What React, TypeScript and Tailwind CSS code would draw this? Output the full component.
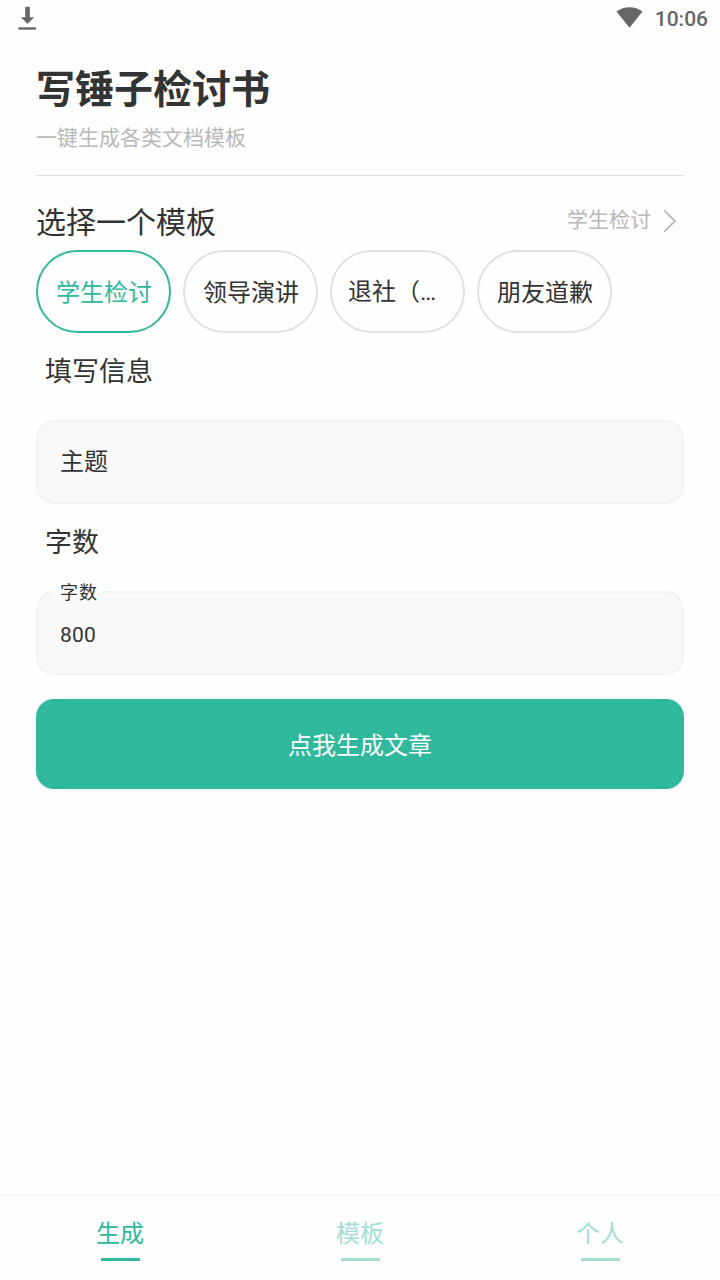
import { useState } from 'react'
import clsx from 'clsx'

const templates = ['学生检讨', '领导演讲', '退社（团）申请', '朋友道歉']
const tabs = ['生成', '模板', '个人']

export default function App() {
  const [template, setTemplate] = useState(templates[0])
  const [tab, setTab] = useState(tabs[0])

  return (
    <div className="flex h-[1280px] w-[720px] flex-col overflow-hidden bg-[#fefefe] font-[Roboto,'Noto_Sans_CJK_SC',sans-serif] text-[#333333]">
      <StatusBar />

      <main className="flex flex-1 flex-col px-9">
        <header className="h-[140px] border-b border-[#e0e0e0] pt-[25px]">
          <h1 className="text-[39px] font-bold leading-[58px]">写锤子检讨书</h1>
          <p className="mt-1 text-[21px] leading-[30px] text-[#b8b8b8]">
            一键生成各类文档模板
          </p>
        </header>

        <section>
          <div className="flex h-[74px] items-start justify-between pt-[25px]">
            <h2 className="text-[30px] leading-[44px]">选择一个模板</h2>
            <button
              type="button"
              className="flex items-center gap-3 pr-[7px] pt-1 text-[21px] leading-[30px] text-[#b8b8b8]"
            >
              学生检讨
              <ChevronIcon />
            </button>
          </div>
          <div className="flex gap-3">
            {templates.map((name) => (
              <TemplateChip
                key={name}
                name={name}
                active={name === template}
                onClick={() => setTemplate(name)}
              />
            ))}
          </div>
        </section>

        <h3 className="mt-[19px] pl-[9px] text-[27px] leading-[40px]">填写信息</h3>
        <div className="mt-7 flex h-[84px] items-center rounded-[18px] border-2 border-[#f3f3f3] bg-[#f9f9f9] px-[22px] text-[24px]">
          主题
        </div>

        <h3 className="mt-[19px] pl-[9px] text-[27px] leading-[40px]">字数</h3>
        <div className="relative mt-7 flex h-[84px] items-center rounded-[18px] border-2 border-[#f3f3f3] bg-[#f9f9f9] px-[22px]">
          <span className="absolute -top-[2px] left-4 h-[2px] w-[50px] bg-[#f9f9f9]" />
          <label className="absolute -top-[13px] left-[22px] text-[18px] leading-[26px] tracking-[0.9px]">
            字数
          </label>
          <span className="pt-[5px] text-[21px] tracking-[0.2px]">800</span>
        </div>

        <button
          type="button"
          className="mt-6 h-[90px] rounded-[18px] bg-[#30b89d] pt-1 text-[24px] text-white"
        >
          点我生成文章
        </button>
      </main>

      <nav className="grid h-[84px] grid-cols-3 shadow-[0_0_3px_rgba(0,0,0,0.1)]">
        {tabs.map((name) => (
          <button
            key={name}
            type="button"
            onClick={() => setTab(name)}
            className={clsx(
              'flex flex-col items-center pt-[21px] text-[24px] leading-[34px]',
              name === tab ? 'text-[#30b89d]' : 'text-[#a2dfd2]',
            )}
          >
            {name}
            <span className="ml-px mt-[7px] h-[3px] w-[39px] bg-current" />
          </button>
        ))}
      </nav>
    </div>
  )
}

function StatusBar() {
  return (
    <div className="flex h-9 items-center justify-between pl-[18px] pr-3 text-[#666666]">
      <svg width="18" height="24" viewBox="0 0 18 24" fill="currentColor">
        <path d="M7.2.8h4.6v10.4h4.4L9.5 17.7 2.8 11.2h4.4z" />
        <path d="M.4 21.3H18v2.4H.4z" />
      </svg>
      <div className="flex items-start gap-3">
        <svg
          width="27"
          height="21"
          viewBox="0 0 27 21"
          fill="currentColor"
          className="mt-[7px]"
        >
          <path d="M.5 4.6C4.3 1.7 8.7.2 13.5.2s9.2 1.5 13 4.4L13.5 20.8z" />
        </svg>
        <span className="pt-px text-[21px] font-medium leading-9">10:06</span>
      </div>
    </div>
  )
}

type TemplateChipProps = {
  name: string
  active: boolean
  onClick: () => void
}

function TemplateChip({ name, active, onClick }: TemplateChipProps) {
  const isLong = name.length > 4

  return (
    <button
      type="button"
      onClick={onClick}
      className={clsx(
        'h-[83px] w-[135px] rounded-full border-2 text-[24px]',
        active ? 'border-[#30b89d] text-[#30b89d]' : 'border-[#e0e0e0]',
        isLong ? 'pl-4 text-left' : 'pl-px pt-[3px] text-center',
      )}
    >
      {isLong ? `${name.slice(0, 3)}…` : name}
    </button>
  )
}

function ChevronIcon() {
  return (
    <svg
      width="14"
      height="24"
      viewBox="0 0 14 24"
      fill="none"
      stroke="currentColor"
      strokeWidth="1.8"
      className="mt-0.5"
    >
      <path d="M1.2 1.4l10.8 10.6L1.2 22.6" />
    </svg>
  )
}
